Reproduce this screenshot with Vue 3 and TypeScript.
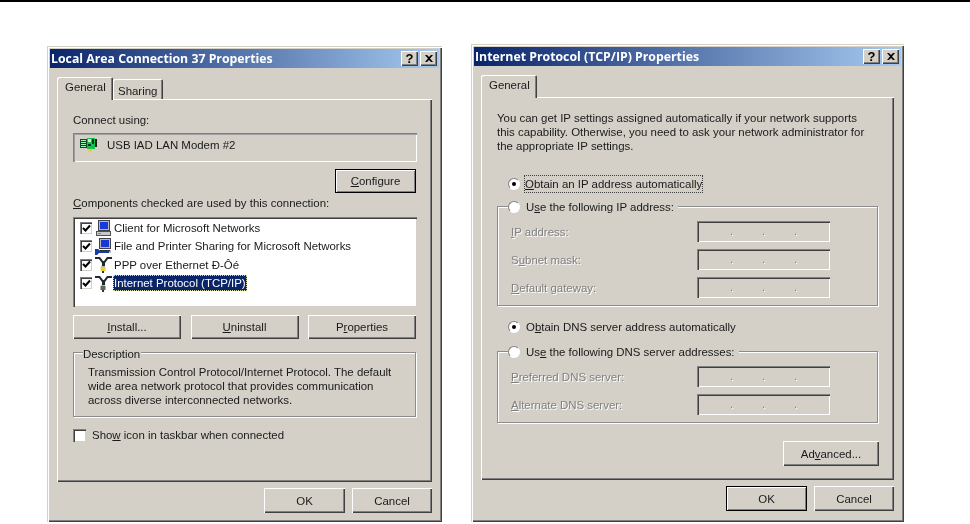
<script setup lang="ts">
interface Comp { label: string; icon: 'client' | 'share' | 'ppp' | 'tcp'; selected?: boolean }
const components: Comp[] = [
  { label: 'Client for Microsoft Networks', icon: 'client' },
  { label: 'File and Printer Sharing for Microsoft Networks', icon: 'share' },
  { label: 'PPP over Ethernet Đ-Ôé', icon: 'ppp' },
  { label: 'Internet Protocol (TCP/IP)', icon: 'tcp', selected: true },
]
const ipFields = [
  { pre: '', u: 'I', post: 'P address:' },
  { pre: 'S', u: 'u', post: 'bnet mask:' },
  { pre: '', u: 'D', post: 'efault gateway:' },
]
const dnsFields = [
  { pre: '', u: 'P', post: 'referred DNS server:' },
  { pre: '', u: 'A', post: 'lternate DNS server:' },
]
</script>

<template>
  <div class="page">
    <section class="dialog left">
      <header class="title">
        <span>Local Area Connection 37 Properties</span>
        <div class="caps">
          <button class="cap help">?</button>
          <button class="cap close">
            <svg width="8" height="7" viewBox="0 0 8 7"><path d="M0 0h2l2 2 2-2h2L5 3.500 8 7H6L4 5 2 7H0l3-3.500z" fill="#000"/></svg>
          </button>
        </div>
      </header>
      <nav class="tabs">
        <div class="tab active">General</div>
        <div class="tab">Sharing</div>
      </nav>
      <div class="panel panel-left">
        <div class="line">Connect using:</div>
        <div class="adapter">
          <svg width="18" height="16" viewBox="0 0 18 16">
            <rect x="0" y="2" width="7" height="9" fill="#064a2c"/>
            <path d="M1 3.500h5M1 5.500h5M1 7.500h5M1 9.500h5" stroke="#a8f0b0"/>
            <rect x="7" y="1" width="8" height="11" fill="#14c050"/>
            <rect x="8" y="2" width="3" height="3" fill="#d0f8b8"/>
            <rect x="12" y="2" width="2" height="5" fill="#0a3a20"/>
            <rect x="8" y="7" width="3" height="2" fill="#0a3a20"/>
            <rect x="15" y="2" width="2" height="8" fill="#202020"/>
            <rect x="8" y="12" width="4" height="3" fill="#e8d040"/>
          </svg>
          <span>USB IAD LAN Modem #2</span>
        </div>
        <div class="right-row"><button class="btn default configure"><span><u>C</u>onfigure</span></button></div>
        <div class="line comp-label"><u>C</u>omponents checked are used by this connection:</div>
        <ul class="list">
          <li v-for="c in components" :key="c.label" class="row">
            <span class="check on">
              <svg width="9" height="9" viewBox="0 0 9 9"><path d="M1 4l2.500 2.500L8 1.500" fill="none" stroke="#000" stroke-width="2"/></svg>
            </span>
            <svg v-if="c.icon === 'client'" class="ico" width="17" height="17" viewBox="0 0 17 17">
              <rect x="3.500" y="0.500" width="11" height="10" fill="#b8b8c0" stroke="#404048"/>
              <rect x="5" y="2" width="8" height="7" fill="#1838d8"/>
              <rect x="1.500" y="11.500" width="14" height="4" fill="#c8c8c8" stroke="#505050"/>
              <rect x="3" y="13" width="3" height="1" fill="#20c040"/>
            </svg>
            <svg v-else-if="c.icon === 'share'" class="ico" width="17" height="17" viewBox="0 0 17 17">
              <rect x="4.500" y="0.500" width="11" height="10" fill="#b8b8c0" stroke="#404048"/>
              <rect x="6" y="2" width="8" height="7" fill="#1838d8"/>
              <path d="M0 11h3l2 1.500h9v2.500H4l-2 2H0z" fill="#1838b0"/>
              <path d="M5 12.500h10v2" fill="none" stroke="#303030"/>
            </svg>
            <svg v-else class="ico" width="17" height="17" viewBox="0 0 17 17">
              <path d="M0 1h5l3 4h1l3-4h5v2h-4l-3 4v3H7V7L4 3H0z" fill="#202830"/>
              <rect x="6" y="10" width="4" height="1" fill="#b0b0b0"/>
              <rect x="5.500" y="11" width="5" height="4" :fill="c.icon === 'ppp' ? '#e8d030' : '#5a6a50'"/>
              <rect x="7" y="15" width="2" height="2" fill="#303030"/>
            </svg>
            <span class="row-text" :class="{ sel: c.selected }">{{ c.label }}</span>
          </li>
        </ul>
        <div class="btn-row">
          <button class="btn"><span><u>I</u>nstall...</span></button>
          <button class="btn"><span><u>U</u>ninstall</span></button>
          <button class="btn"><span>P<u>r</u>operties</span></button>
        </div>
        <div class="group desc">
          <div class="legend plain">Description</div>
          <p>Transmission Control Protocol/Internet Protocol. The default<br>wide area network protocol that provides communication<br>across diverse interconnected networks.</p>
        </div>
        <div class="taskbar">
          <span class="check big"></span>
          <span>Sho<u>w</u> icon in taskbar when connected</span>
        </div>
      </div>
      <footer class="foot">
        <button class="btn foot-btn"><span>OK</span></button>
        <button class="btn foot-btn cancel"><span>Cancel</span></button>
      </footer>
    </section>

    <section class="dialog right">
      <header class="title">
        <span>Internet Protocol (TCP/IP) Properties</span>
        <div class="caps">
          <button class="cap help">?</button>
          <button class="cap close">
            <svg width="8" height="7" viewBox="0 0 8 7"><path d="M0 0h2l2 2 2-2h2L5 3.500 8 7H6L4 5 2 7H0l3-3.500z" fill="#000"/></svg>
          </button>
        </div>
      </header>
      <nav class="tabs">
        <div class="tab active">General</div>
      </nav>
      <div class="panel panel-right">
        <p class="intro">You can get IP settings assigned automatically if your network supports<br>this capability. Otherwise, you need to ask your network administrator for<br>the appropriate IP settings.</p>
        <div class="opt first">
          <span class="radio on"></span>
          <span class="focus"><u>O</u>btain an IP address automatically</span>
        </div>
        <div class="group fields ip">
          <div class="legend">
            <span class="radio"></span>
            <span>U<u>s</u>e the following IP address:</span>
          </div>
          <div v-for="f in ipFields" :key="f.post" class="field">
            <span class="dis">{{ f.pre }}<u>{{ f.u }}</u>{{ f.post }}</span>
            <div class="ipbox"><i>.</i><i>.</i><i>.</i></div>
          </div>
        </div>
        <div class="opt second">
          <span class="radio on"></span>
          <span>O<u>b</u>tain DNS server address automatically</span>
        </div>
        <div class="group fields dns">
          <div class="legend">
            <span class="radio"></span>
            <span>Us<u>e</u> the following DNS server addresses:</span>
          </div>
          <div v-for="f in dnsFields" :key="f.post" class="field">
            <span class="dis">{{ f.pre }}<u>{{ f.u }}</u>{{ f.post }}</span>
            <div class="ipbox"><i>.</i><i>.</i><i>.</i></div>
          </div>
        </div>
        <div class="right-row adv"><button class="btn advanced"><span>Ad<u>v</u>anced...</span></button></div>
      </div>
      <footer class="foot">
        <button class="btn default foot-btn"><span>OK</span></button>
        <button class="btn foot-btn cancel"><span>Cancel</span></button>
      </footer>
    </section>
  </div>
</template>

<style>
html, body { margin: 0; background: #fff; }
</style>

<style scoped>
.page {
  box-sizing: border-box;
  width: 970px;
  height: 524px;
  border-top: 2px solid #000;
  padding: 0 0 2px 47px;
  display: flex;
  align-items: flex-end;
  gap: 29px;
  background: #fff;
  font-family: "Liberation Sans", Arial, sans-serif;
  font-size: 11.450px;
  line-height: 14px;
  color: #1a1a1a;
  overflow: hidden;
  filter: blur(0.4px);
}
.dialog {
  box-sizing: border-box;
  background: #d4d0c8;
  padding: 3px;
  box-shadow: inset 1px 1px 0 #d4d0c8, inset 2px 2px 0 #fff, inset -1px -1px 0 #404040, inset -2px -2px 0 #808080;
}
.left { width: 395px; height: 476px; }
.right { width: 433px; height: 478px; }
.title {
  height: 19px;
  background: linear-gradient(90deg, #0a246a, #a6caf0);
  color: #fff;
  font-family: "Open Sans", sans-serif;
  font-weight: 700;
  font-size: 12.300px;
  line-height: 20px;
  padding-left: 1px;
  display: flex;
  justify-content: space-between;
  white-space: nowrap;
}
.caps { display: flex; padding: 2px 2px 0 0; }
.cap {
  width: 17px;
  height: 15px;
  padding: 0;
  border: 0;
  background: #d4d0c8;
  box-shadow: inset 1px 1px 0 #fff, inset -1px -1px 0 #404040, inset -2px -2px 0 #808080;
  display: flex;
  align-items: center;
  justify-content: center;
  font: 700 13px/15px "Liberation Sans", sans-serif;
  color: #000;
}
.close { margin-left: 2px; }
.tabs {
  display: flex;
  align-items: flex-end;
  height: 22px;
  margin: 9px 0 0 7px;
}
.tab {
  box-sizing: border-box;
  height: 20px;
  width: 50px;
  padding: 5px 0 0 5px;
  position: relative;
  border-radius: 2px 2px 0 0;
  box-shadow: inset 1px 1px 0 #fff, inset -1px 0 0 #404040, inset -2px 0 0 #808080;
}
.tab.active {
  width: 56px;
  padding: 3px 0 0 8px;
  z-index: 1;
  margin-bottom: -1px;
  height: 23px;
  background: #d4d0c8;
}
.panel {
  box-sizing: border-box;
  margin: 0 7px;
  height: 383px;
  box-shadow: inset 1px 1px 0 #fff, inset -1px -1px 0 #404040, inset -2px -2px 0 #808080;
}
.panel-left { padding: 14px 15px 0 16px; }
.panel-right { padding: 14px 16px 0 16px; }
.line { height: 14px; white-space: nowrap; }
.adapter {
  box-sizing: border-box;
  height: 29px;
  margin-top: 6px;
  padding: 4px 0 0 7px;
  display: flex;
  gap: 9px;
  align-items: flex-start;
  box-shadow: inset 1px 1px 0 #808080, inset 2px 2px 0 #a0a0a0, inset -1px -1px 0 #fff;
}
.adapter span { line-height: 16px; }
.right-row { display: flex; justify-content: flex-end; margin-top: 7px; }
.btn {
  box-sizing: border-box;
  height: 24px;
  padding: 0;
  border: 0;
  background: #d4d0c8;
  color: #1a1a1a;
  font: inherit;
  text-align: center;
  box-shadow: inset 1px 1px 0 #fff, inset -1px -1px 0 #404040, inset -2px -2px 0 #808080;
}
.btn.default {
  box-shadow: inset 0 0 0 1px #000, inset 2px 2px 0 #fff, inset -2px -2px 0 #808080;
}
.configure { width: 81px; margin-right: 1px; }
.comp-label { margin-top: 3px; }
.list {
  box-sizing: border-box;
  list-style: none;
  margin: 7px 0 0;
  padding: 2px 0 0 7px;
  height: 90px;
  background: #fff;
  box-shadow: inset 1px 1px 0 #808080, inset 2px 2px 0 #404040, inset -1px -1px 0 #d4d0c8;
}
.row { height: 18.300px; display: flex; align-items: center; white-space: nowrap; }
.check {
  flex: none;
  box-sizing: border-box;
  width: 12px;
  height: 12px;
  background: #fff;
  display: flex;
  align-items: center;
  justify-content: center;
  box-shadow: inset 1px 1px 0 #808080, inset 2px 2px 0 #404040, inset -1px -1px 0 #d4d0c8;
}
.check.big { width: 13px; height: 13px; }
.ico { flex: none; margin: 0 1px 0 3px; }
.row-text { padding: 1px 1px; line-height: 14px; }
.row-text.sel { background: #0a246a; color: #fff; outline: 1px dotted #d8d8a0; outline-offset: -1px; }
.btn-row { display: flex; justify-content: space-between; margin: 8px 1px 0 0; }
.btn-row .btn { width: 108px; }
.group {
  box-sizing: border-box;
  position: relative;
  border: 1px solid #8c8c8c;
  box-shadow: 1px 1px 0 #fff, inset 1px 1px 0 #fff;
}
.desc { margin: 13px 1px 0 0; height: 65px; padding-top: 12px; }
.desc p { margin: 0; padding-left: 14px; white-space: nowrap; }
.legend {
  position: absolute;
  top: -8px;
  left: 10px;
  height: 16px;
  display: flex;
  align-items: center;
  gap: 6px;
  padding-right: 4px;
  background: #d4d0c8;
  white-space: nowrap;
}
.legend.plain { padding: 0 1px 0 0; top: -7px; left: 9px; }
.taskbar { display: flex; align-items: center; gap: 6px; margin-top: 11px; height: 14px; }
.foot {
  display: flex;
  justify-content: flex-end;
  gap: 7px;
  padding: 6px 7px 0 0;
}
.foot-btn { width: 81px; height: 25px; }
.foot-btn.cancel { width: 80px; }
.intro { margin: 0; white-space: nowrap; }
.opt { display: flex; align-items: center; height: 16px; padding-left: 11px; gap: 5px; white-space: nowrap; }
.opt.first { margin-top: 23px; }
.opt.second { margin-top: 13px; gap: 6px; }
.radio {
  flex: none;
  box-sizing: border-box;
  position: relative;
  width: 12px;
  height: 12px;
  border-radius: 50%;
  background: #fff;
  border: 1px solid;
  border-color: #808080 #fff #fff #808080;
}
.radio.on::after {
  content: "";
  position: absolute;
  left: 3px;
  top: 3px;
  width: 4px;
  height: 4px;
  border-radius: 50%;
  background: #000;
}
.focus { outline: 1px dotted #404040; padding: 1px 0; }
.fields {
  padding: 14px 47px 0 13px;
  display: flex;
  flex-direction: column;
  gap: 7px;
}
.ip { margin-top: 14px; height: 100px; }
.dns { margin-top: 16px; height: 72px; }
.field { display: flex; justify-content: space-between; align-items: center; height: 21px; white-space: nowrap; }
.dis { color: #808080; text-shadow: 1px 1px 0 #fff; }
.ipbox {
  box-sizing: border-box;
  width: 133px;
  height: 21px;
  padding: 0 0 0 33px;
  display: flex;
  gap: 32px;
  box-shadow: inset 1px 1px 0 #808080, inset 2px 2px 0 #404040, inset -1px -1px 0 #fff;
  color: #808080;
}
.ipbox i { font-style: normal; width: 0; line-height: 20px; text-shadow: 1px 1px 0 #fff; }
.adv { margin-top: 18px; margin-right: -1px; }
.advanced { width: 96px; height: 25px; }
</style>
